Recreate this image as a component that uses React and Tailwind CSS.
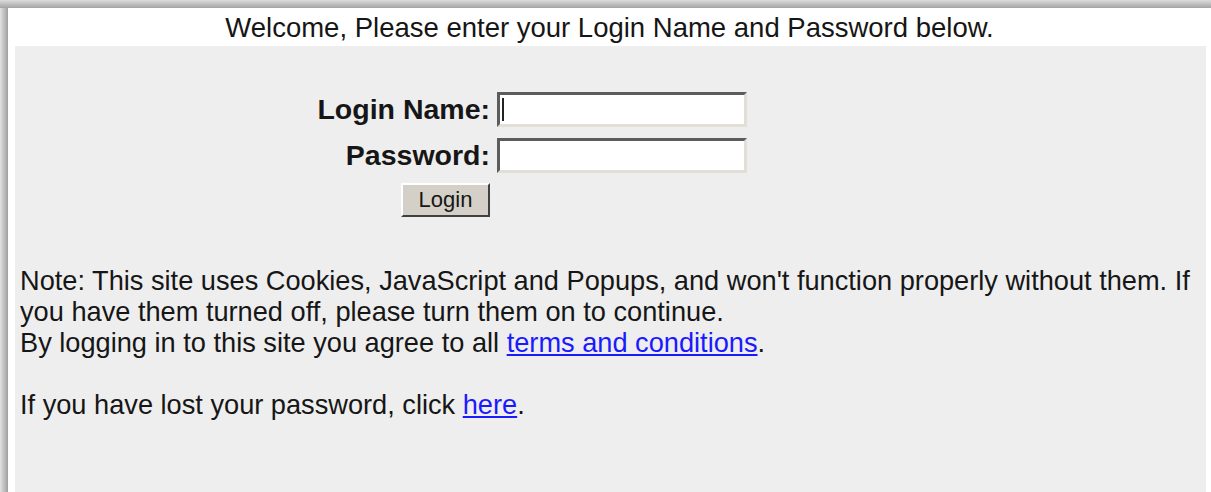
export default function App() {
  return (
    <div
      className="flex h-[492px] w-[1211px] flex-col overflow-hidden bg-white text-[#161616]"
      style={{ fontFamily: '"Liberation Sans", Arial, sans-serif' }}
    >
      {/* window shadow along the top edge */}
      <div className="h-[8px] w-full shrink-0 bg-gradient-to-b from-[#dcdcdc] to-[#a4a4a4]" />
      <div className="flex min-h-0 flex-1">
        {/* window shadow along the left edge */}
        <div className="w-[8px] shrink-0 bg-gradient-to-r from-[#e2e2e2] to-[#a0a0a0]" />
        <div className="flex min-w-0 flex-1 flex-col">
          <div className="h-[38px] shrink-0 pt-[4px] text-center text-[27.5px] leading-[31px]">
            Welcome, Please enter your Login Name and Password below.
          </div>
          <div className="ml-[7px] mr-[5px] flex-1 bg-[#eeeeee] pt-[46px] pl-[5px]">
            <div className="-ml-[5px] grid grid-cols-[475px_250px] items-center gap-x-[7px] gap-y-[11px]">
              <label className="text-right text-[28.5px] font-bold leading-[35px]">Login Name:</label>
              <span className="relative block">
                <input
                  type="text"
                  className="block h-[35px] w-[250px] border-[3px] border-t-[#5c5c5c] border-l-[#5c5c5c] border-b-[#e2dfd7] border-r-[#e2dfd7] bg-white outline-none"
                />
                {/* text caret */}
                <span className="absolute left-[5px] top-[6px] h-[23px] w-[2px] bg-[#222]" />
              </span>
              <label className="text-right text-[28.5px] font-bold leading-[35px]">Password:</label>
              <input
                type="password"
                className="block h-[35px] w-[250px] border-[3px] border-t-[#5c5c5c] border-l-[#5c5c5c] border-b-[#e2dfd7] border-r-[#e2dfd7] bg-white outline-none"
              />
              <div className="mt-[-1px] flex justify-end">
                <button
                  type="button"
                  className="h-[34px] w-[89px] border-2 border-t-white border-l-white border-b-[#404040] border-r-[#404040] bg-[#d4d0c8] text-[22px] leading-[28px] text-[#161616]"
                >
                  Login
                </button>
              </div>
            </div>
            <div className="mt-[48px] text-[27.2px] leading-[31px]">
              <p>
                Note: This site uses Cookies, JavaScript and Popups, and won't function properly without them. If
                you have them turned off, please turn them on to continue.
                <br />
                By logging in to this site you agree to all{' '}
                <a href="#" className="text-[#1a1aff] underline">terms and conditions</a>.
              </p>
              <p className="mt-[31px]">
                If you have lost your password, click{' '}
                <a href="#" className="text-[#1a1aff] underline">here</a>.
              </p>
            </div>
          </div>
        </div>
      </div>
    </div>
  );
}
